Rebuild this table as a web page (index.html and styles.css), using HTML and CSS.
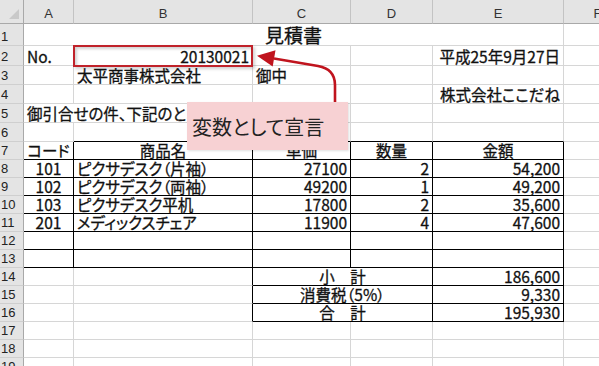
FILE: index.html
```html
<!DOCTYPE html>
<html lang="ja">
<head>
<meta charset="utf-8">
<title>見積書</title>
<link rel="stylesheet" href="styles.css">
</head>
<body>
<div class="page">
  <div class="sheet">
    <!-- header row -->
    <div class="corner"><span class="tri"></span></div>
    <div class="hd">A</div><div class="hd">B</div><div class="hd">C</div><div class="hd">D</div><div class="hd">E</div><div class="hd">F</div>

    <!-- row 1 -->
    <div class="rn">1</div>
    <div class="c m span5 title">見積書</div>
    <div class="c"></div>

    <!-- row 2 -->
    <div class="rn">2</div>
    <div class="c">No.</div>
    <div class="c r">20130021</div>
    <div class="c"></div>
    <div class="c"></div>
    <div class="c r">平成25年9月27日</div>
    <div class="c"></div>

    <!-- row 3 -->
    <div class="rn">3</div>
    <div class="c"></div>
    <div class="c">太平商事株式会社</div>
    <div class="c">御中</div>
    <div class="c"></div>
    <div class="c"></div>
    <div class="c"></div>

    <!-- row 4 -->
    <div class="rn">4</div>
    <div class="c"></div>
    <div class="c"></div>
    <div class="c"></div>
    <div class="c"></div>
    <div class="c r">株式会社ここだね</div>
    <div class="c"></div>

    <!-- row 5 -->
    <div class="rn">5</div>
    <div class="c span3">御引合せの件、下記のとおり</div>
    <div class="c"></div>
    <div class="c"></div>
    <div class="c"></div>

    <!-- row 6 -->
    <div class="rn">6</div>
    <div class="c"></div>
    <div class="c kb"></div>
    <div class="c kb"></div>
    <div class="c kb"></div>
    <div class="c kb"></div>
    <div class="c"></div>

    <!-- row 7 -->
    <div class="rn">7</div>
    <div class="c m kr kb">コード</div>
    <div class="c m kr kb">商品名</div>
    <div class="c m kr kb">単価</div>
    <div class="c m kr kb">数量</div>
    <div class="c m kr kb">金額</div>
    <div class="c"></div>

    <!-- row 8 -->
    <div class="rn">8</div>
    <div class="c m kr kb">101</div>
    <div class="c kr kb">ピクサデスク（片袖）</div>
    <div class="c r kr kb">27100</div>
    <div class="c r kr kb">2</div>
    <div class="c r kr kb">54,200</div>
    <div class="c"></div>

    <!-- row 9 -->
    <div class="rn">9</div>
    <div class="c m kr kb">102</div>
    <div class="c kr kb">ピクサデスク（両袖）</div>
    <div class="c r kr kb">49200</div>
    <div class="c r kr kb">1</div>
    <div class="c r kr kb">49,200</div>
    <div class="c"></div>

    <!-- row 10 -->
    <div class="rn">10</div>
    <div class="c m kr kb">103</div>
    <div class="c kr kb">ピクサデスク平机</div>
    <div class="c r kr kb">17800</div>
    <div class="c r kr kb">2</div>
    <div class="c r kr kb">35,600</div>
    <div class="c"></div>

    <!-- row 11 -->
    <div class="rn">11</div>
    <div class="c m kr kb">201</div>
    <div class="c kr kb">メディックスチェア</div>
    <div class="c r kr kb">11900</div>
    <div class="c r kr kb">4</div>
    <div class="c r kr kb">47,600</div>
    <div class="c"></div>

    <!-- row 12 -->
    <div class="rn">12</div>
    <div class="c kr kb"></div>
    <div class="c kr kb"></div>
    <div class="c kr kb"></div>
    <div class="c kr kb"></div>
    <div class="c kr kb"></div>
    <div class="c"></div>

    <!-- row 13 -->
    <div class="rn">13</div>
    <div class="c kr kb"></div>
    <div class="c kr kb"></div>
    <div class="c kr kb"></div>
    <div class="c kr kb"></div>
    <div class="c kr kb"></div>
    <div class="c"></div>

    <!-- row 14 -->
    <div class="rn">14</div>
    <div class="c"></div>
    <div class="c kr"></div>
    <div class="c m span2 kr kb">小　計</div>
    <div class="c r kr kb">186,600</div>
    <div class="c"></div>

    <!-- row 15 -->
    <div class="rn">15</div>
    <div class="c"></div>
    <div class="c kr"></div>
    <div class="c m span2 kr kb">消費税（5%）</div>
    <div class="c r kr kb">9,330</div>
    <div class="c"></div>

    <!-- row 16 -->
    <div class="rn">16</div>
    <div class="c"></div>
    <div class="c kr"></div>
    <div class="c m span2 kr kb">合　計</div>
    <div class="c r kr kb">195,930</div>
    <div class="c"></div>

    <!-- rows 17-19 -->
    <div class="rn">17</div>
    <div class="c"></div><div class="c"></div><div class="c"></div><div class="c"></div><div class="c"></div><div class="c"></div>
    <div class="rn">18</div>
    <div class="c"></div><div class="c"></div><div class="c"></div><div class="c"></div><div class="c"></div><div class="c"></div>
    <div class="rn">19</div>
    <div class="c"></div><div class="c"></div><div class="c"></div><div class="c"></div><div class="c"></div><div class="c"></div>
  </div>

  <div class="highlight"></div>

  <svg class="arrow" width="599" height="366" viewBox="0 0 599 366">
    <path d="M335 102 L335 85 Q335 69 318 66 L274 58.5" fill="none" stroke="#c0141e" stroke-width="2.6" stroke-linejoin="round"/>
    <polygon points="257,55.8 275.5,50.2 272.7,66.6" fill="#c0141e"/>
  </svg>

  <div class="callout">変数として宣言</div>
</div>
</body>
</html>
```

FILE: styles.css
```css
html, body {
  margin: 0;
  padding: 0;
  background: #ffffff;
}

body {
  width: 599px;
  height: 366px;
  overflow: hidden;
  font-family: "Noto Sans CJK JP", "Noto Sans", sans-serif;
  font-feature-settings: "palt";
  color: #111;
}

.page {
  position: relative;
  width: 599px;
  height: 366px;
  overflow: hidden;
}

.sheet {
  display: grid;
  grid-template-columns: 24px 50px 179px 98px 82px 131px 68px;
  grid-template-rows: 24px 22px 20px 19px 19px 19px 19px repeat(13, 18px);
  width: 652px;
}

.corner {
  position: relative;
  background: #e4e4e4;
  border-right: 1px solid #a9a9a9;
  border-bottom: 1px solid #a9a9a9;
  box-sizing: border-box;
}

.tri {
  position: absolute;
  right: 4px;
  bottom: 4px;
  width: 0;
  height: 0;
  border-left: 10px solid transparent;
  border-bottom: 10px solid #c9c9c9;
}

.hd {
  box-sizing: border-box;
  background: #e4e4e4;
  border-right: 1px solid #c3c3c3;
  border-bottom: 1px solid #a9a9a9;
  display: flex;
  align-items: flex-end;
  justify-content: center;
  padding-bottom: 3px;
  font-family: "Liberation Sans", Arial, sans-serif;
  font-size: 13px;
  line-height: 13px;
  color: #333;
}

.rn {
  box-sizing: border-box;
  background: #e4e4e4;
  border-right: 1px solid #a9a9a9;
  border-bottom: 1px solid #cfcfcf;
  display: flex;
  align-items: flex-end;
  padding: 0 0 2px 1px;
  font-family: "Liberation Sans", Arial, sans-serif;
  font-size: 13px;
  line-height: 13px;
  color: #222;
}

.c {
  box-sizing: border-box;
  border-right: 1px solid #d6d6d6;
  border-bottom: 1px solid #d6d6d6;
  display: flex;
  align-items: flex-end;
  justify-content: flex-start;
  padding: 0 3px 1px 3px;
  font-size: 15.5px;
  line-height: 16px;
  white-space: nowrap;
  min-width: 0;
  -webkit-text-stroke: 0.3px #111;
}

.r { justify-content: flex-end; }
.m { justify-content: center; }

.kr { border-right-color: #000; }
.kb { border-bottom-color: #000; }

.span2 { grid-column: span 2; }
.span3 { grid-column: span 3; }
.span5 { grid-column: span 5; }

.title {
  font-size: 19px;
  line-height: 19px;
  padding-bottom: 1px;
}

.highlight {
  position: absolute;
  left: 73px;
  top: 45px;
  width: 180px;
  height: 22px;
  box-sizing: border-box;
  border: 2px solid #c0222a;
  box-shadow: inset 2px 2px 3px rgba(0, 0, 0, 0.18), 2px 2px 3px rgba(0, 0, 0, 0.18);
}

.arrow {
  position: absolute;
  left: 0;
  top: 0;
  pointer-events: none;
}

.callout {
  position: absolute;
  left: 187px;
  top: 102px;
  width: 161px;
  height: 48px;
  box-sizing: border-box;
  background: #f7d1d3;
  display: flex;
  align-items: center;
  padding: 2px 0 0 5px;
  font-size: 20px;
  line-height: 20px;
  color: #222;
  box-shadow: 1px 1px 2px rgba(0, 0, 0, 0.12);
}
```
